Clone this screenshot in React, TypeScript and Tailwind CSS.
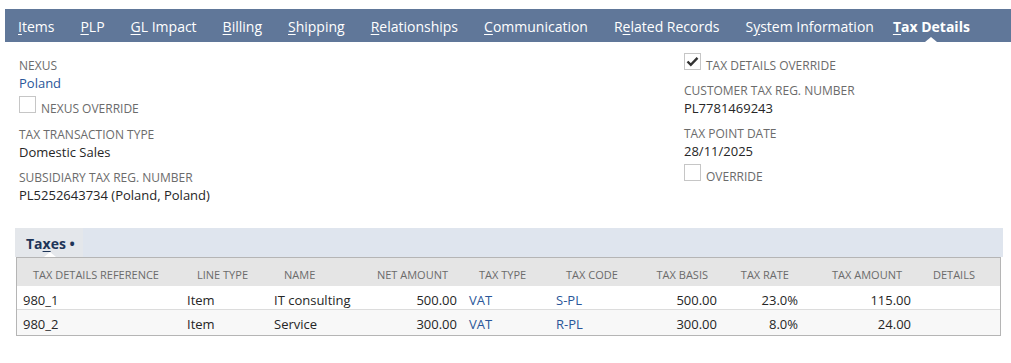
import React from "react";

const tabs: { pre: string; key: string; post: string; active?: boolean }[] = [
  { pre: "", key: "I", post: "tems" },
  { pre: "", key: "P", post: "LP" },
  { pre: "", key: "G", post: "L Impact" },
  { pre: "", key: "B", post: "illing" },
  { pre: "", key: "S", post: "hipping" },
  { pre: "", key: "R", post: "elationships" },
  { pre: "", key: "C", post: "ommunication" },
  { pre: "R", key: "e", post: "lated Records" },
  { pre: "S", key: "y", post: "stem Information" },
  { pre: "", key: "T", post: "ax Details", active: true },
];

function Label({ children }: { children: React.ReactNode }) {
  return <div className="text-[12px] leading-[17px] text-[#6b6b6b] uppercase">{children}</div>;
}

function Value({ children, link }: { children: React.ReactNode; link?: boolean }) {
  return (
    <div className={`text-[13px] leading-[18px] ${link ? "text-[#2a5699]" : "text-[#262626]"}`}>{children}</div>
  );
}

function Checkbox({ label, checked }: { label: string; checked?: boolean }) {
  return (
    <div className="flex items-start">
      <div className="w-[17px] h-[17px] border border-[#c6c6c6] bg-white flex items-center justify-center">
        {checked && (
          <svg width="13" height="11" viewBox="0 0 13 11">
            <path d="M1.5 5.5 L4.8 8.8 L11.5 1.8" fill="none" stroke="#333" strokeWidth="2.4" />
          </svg>
        )}
      </div>
      <div className="ml-[5px] mt-[4px] text-[12px] leading-[17px] text-[#6b6b6b] uppercase">{label}</div>
    </div>
  );
}

const cols = "grid grid-cols-[164px_87px_95px_100px_87px_91px_82px_81px_113px_83px]";

const rows = [
  ["980_1", "Item", "IT consulting", "500.00", "VAT", "S-PL", "500.00", "23.0%", "115.00", ""],
  ["980_2", "Item", "Service", "300.00", "VAT", "R-PL", "300.00", "8.0%", "24.00", ""],
];

const headers = [
  "Tax Details Reference",
  "Line Type",
  "Name",
  "Net Amount",
  "Tax Type",
  "Tax Code",
  "Tax Basis",
  "Tax Rate",
  "Tax Amount",
  "Details",
];
const rightCols = [3, 6, 7, 8];
const linkCols = [4, 5];

export default function App() {
  return (
    <div className="w-[1011px] h-[363px] bg-white overflow-hidden pt-[9px] font-['Open_Sans',sans-serif]">
      {/* Tab bar */}
      <div className="ml-[5px] w-[1006px] h-[33px] bg-[#607799] flex items-center pl-[13px] gap-[26px] text-white text-[14px] leading-[20px]">
        {tabs.map((t, i) => (
          <div key={i} className={`relative h-full flex items-center pt-[2px] whitespace-nowrap ${t.active ? "font-bold ml-[-7px]" : ""}`}>
            <span>
              {t.pre}
              <span className="underline underline-offset-[2px]">{t.key}</span>
              {t.post}
            </span>
            {t.active && (
              <div className="absolute bottom-0 left-1/2 -translate-x-1/2 w-0 h-0 border-l-[6px] border-r-[6px] border-b-[5px] border-l-transparent border-r-transparent border-b-white" />
            )}
          </div>
        ))}
      </div>

      {/* Form */}
      <div className="flex mt-[11px] ml-[19px]">
        <div className="w-[665px] pt-[4px]">
          <Label>Nexus</Label>
          <Value link>Poland</Value>
          <div className="mt-[4px]">
            <Checkbox label="Nexus Override" />
          </div>
          <div className="mt-[9px]">
            <Label>Tax Transaction Type</Label>
            <Value>Domestic Sales</Value>
          </div>
          <div className="mt-[8px]">
            <Label>Subsidiary Tax Reg. Number</Label>
            <Value>PL5252643734 (Poland, Poland)</Value>
          </div>
        </div>
        <div className="w-[300px]">
          <Checkbox label="Tax Details Override" checked />
          <div className="mt-[8px]">
            <Label>Customer Tax Reg. Number</Label>
            <Value>PL7781469243</Value>
          </div>
          <div className="mt-[8px]">
            <Label>Tax Point Date</Label>
            <Value>28/11/2025</Value>
          </div>
          <div className="mt-[4px]">
            <Checkbox label="Override" />
          </div>
        </div>
      </div>

      {/* Taxes section */}
      <div className="ml-[15px] mt-[24px] w-[988px]">
        <div className="h-[29px] bg-[#dfe5ee] flex">
          <div className="relative w-[68px] h-full bg-[#e4e7eb] pl-[11px] pt-[5px] text-[14px] leading-[22px] font-bold text-[#1e3558] whitespace-nowrap">
            Ta<span className="underline underline-offset-[2px]">x</span>es <span className="font-bold">•</span>
            <div className="absolute bottom-0 left-[35px] -translate-x-1/2 w-0 h-0 border-l-[6px] border-r-[6px] border-b-[5px] border-l-transparent border-r-transparent border-b-white" />
          </div>
        </div>
        <div className="ml-[1px] w-[985px] border border-[#b5b5b5]">
          <div className={`${cols} h-[28px] bg-[#e5e5e5]`}>
            {headers.map((h, i) => (
              <div
                key={i}
                className={`pt-[8px] text-[11px] leading-[17px] text-[#6b6b6b] uppercase whitespace-nowrap ${
                  rightCols.includes(i) ? "text-right pr-[15px]" : "pl-[16px]"
                }`}
              >
                {h}
              </div>
            ))}
          </div>
          {rows.map((r, ri) => (
            <div
              key={ri}
              className={`${cols} ${ri === 0 ? "h-[24px] bg-white border-b border-[#dcdcdc]" : "h-[25px] bg-[#f8f8f8]"}`}
            >
              {r.map((c, ci) => (
                <div
                  key={ci}
                  className={`pt-[5px] text-[13px] leading-[18px] whitespace-nowrap ${
                    linkCols.includes(ci) ? "text-[#2a5699]" : "text-[#262626]"
                  } ${rightCols.includes(ci) ? "text-right pr-[6px]" : "pl-[6px]"}`}
                >
                  {c}
                </div>
              ))}
            </div>
          ))}
        </div>
      </div>
    </div>
  );
}
